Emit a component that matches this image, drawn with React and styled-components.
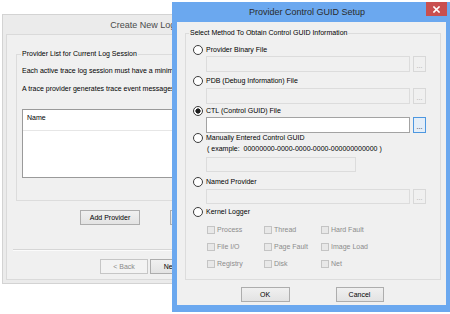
import styled, { createGlobalStyle } from "styled-components";

const GlobalStyle = createGlobalStyle`
  html, body {
    margin: 0;
    padding: 0;
    background: #ffffff;
  }
  body {
    font-family: "Liberation Sans", Arial, sans-serif;
    color: #000;
  }
  * {
    box-sizing: border-box;
  }
`;

const kernelFlags = [
    ["Process", "Thread", "Hard Fault"],
    ["File I/O", "Page Fault", "Image Load"],
    ["Registry", "Disk", "Net"],
];

export default function App() {
    return (
        <>
            <GlobalStyle />
            <Desktop>
                <BackWindow>
                    <BackTitle>Create New Log Session</BackTitle>
                    <BackClient>
                        <GroupBox $pad="0 0 22px 5px" $mt={14}>
                            <Legend $ml={-1}>Provider List for Current Log Session</Legend>
                            <InfoLine $mt={7}>Each active trace log session must have a minimum of one trace provider.</InfoLine>
                            <InfoLine $mt={8}>A trace provider generates trace event messages for the log session.</InfoLine>
                            <ListBox>
                                <ListHeader>Name</ListHeader>
                            </ListBox>
                        </GroupBox>
                        <ButtonRow $mt={9} $pl={64} $gap={30}>
                            <Button $w={60}>Add Provider</Button>
                            <Button $w={60}>Remove</Button>
                        </ButtonRow>
                        <Separator />
                        <ButtonRow $mt={8} $pl={84} $gap={2}>
                            <Button $w={48} disabled>&lt; Back</Button>
                            <Button $w={48}>Next &gt;</Button>
                        </ButtonRow>
                    </BackClient>
                </BackWindow>

                <Dialog>
                    <DialogTitle>
                        <TitleText>Provider Control GUID Setup</TitleText>
                        <CloseButton>
                            <svg width="7" height="7" viewBox="0 0 7 7">
                                <path d="M1 1 L6 6 M6 1 L1 6" stroke="#fff" strokeWidth="1.6" strokeLinecap="square" />
                            </svg>
                        </CloseButton>
                    </DialogTitle>
                    <DialogClient>
                        <GroupBox $pad="0 14px 10px 7px" $mt={6}>
                            <Legend $ml={-4}>Select Method To Obtain Control GUID Information</Legend>

                            <RadioRow $mt={6}><Radio />Provider Binary File</RadioRow>
                            <FileRow $mt={1}><TextBox disabled /><Browse disabled>...</Browse></FileRow>

                            <RadioRow $mt={3}><Radio />PDB (Debug Information) File</RadioRow>
                            <FileRow $mt={2}><TextBox disabled /><Browse disabled>...</Browse></FileRow>

                            <RadioRow $mt={1}><Radio $checked />CTL (Control GUID) File</RadioRow>
                            <FileRow $mt={1}><TextBox /><Browse $focused>...</Browse></FileRow>

                            <RadioRow $mt={-1}><Radio />Manually Entered Control GUID</RadioRow>
                            <Example>( example:&nbsp; 00000000-0000-0000-0000-000000000000 )</Example>
                            <FileRow $mt={3} $h={15}><TextBox disabled $w={150} /></FileRow>

                            <RadioRow $mt={4}><Radio />Named Provider</RadioRow>
                            <FileRow $mt={2} $h={15}><TextBox disabled /><Browse disabled>...</Browse></FileRow>

                            <RadioRow $mt={2}><Radio />Kernel Logger</RadioRow>
                            <CheckGrid>
                                {kernelFlags.flat().map((label) => (
                                    <CheckItem key={label}>
                                        <CheckBox />
                                        {label}
                                    </CheckItem>
                                ))}
                            </CheckGrid>
                        </GroupBox>
                        <DialogButtons>
                            <Button $w={49}>OK</Button>
                            <Button $w={48}>Cancel</Button>
                        </DialogButtons>
                    </DialogClient>
                </Dialog>
            </Desktop>
        </>
    );
}

const Desktop = styled.div`
    position: relative;
    width: 450px;
    height: 314px;
    overflow: hidden;
    background: #ffffff;
`;

const BackWindow = styled.div`
    position: absolute;
    left: 2px;
    top: 14px;
    width: 316px;
    height: 270px;
    border: 1px solid #d3d3d3;
    background: #ebebeb;
    display: flex;
    flex-direction: column;
`;

const BackTitle = styled.div`
    height: 19px;
    display: flex;
    align-items: center;
    justify-content: center;
    padding-top: 1px;
    font-size: 9px;
    color: #4a4a4a;
`;

const BackClient = styled.div`
    flex: 1;
    margin: 0 4px 3px 3px;
    border: 1px solid #dadada;
    background: #f0f0f0;
    display: flex;
    flex-direction: column;
    padding-left: 9px;
`;

const GroupBox = styled.fieldset`
    margin: ${(p) => p.$mt}px 0 0 0;
    padding: ${(p) => p.$pad};
    border: 1px solid #dcdcdc;
    min-width: 0;
    display: flex;
    flex-direction: column;
`;

const Legend = styled.legend`
    font-size: 7px;
    line-height: 10px;
    padding: 0 1px;
    margin-left: ${(p) => p.$ml}px;
    color: #000;
`;

const InfoLine = styled.div`
    margin-top: ${(p) => p.$mt}px;
    font-size: 7px;
    line-height: 10px;
    white-space: nowrap;
`;

const ListBox = styled.div`
    margin-top: 15px;
    height: 69px;
    border: 1px solid #9a9a9a;
    background: #ffffff;
`;

const ListHeader = styled.div`
    height: 21px;
    border-bottom: 1px solid #e6e6e6;
    padding-left: 4px;
    font-size: 7px;
    line-height: 16px;
`;

const ButtonRow = styled.div`
    display: flex;
    margin-top: ${(p) => p.$mt}px;
    padding-left: ${(p) => p.$pl}px;
    gap: ${(p) => p.$gap}px;
`;

const Button = styled.button`
    width: ${(p) => p.$w}px;
    height: 15px;
    padding: 0;
    flex: none;
    font-family: "Liberation Sans", Arial, sans-serif;
    font-size: 7px;
    color: #000;
    border: 1px solid #adadad;
    background: linear-gradient(#f0f0f0, #e3e3e3);

    &:disabled {
        color: #8a8a8a;
        border-color: #c6c6c6;
        background: #f3f3f3;
    }
`;

const Separator = styled.div`
    margin: 24px 0 0 -3px;
    height: 2px;
    background: #d6d6d6;
    border-bottom: 1px solid #fbfbfb;
`;

const Dialog = styled.div`
    position: absolute;
    left: 172px;
    top: 2px;
    width: 278px;
    height: 310px;
    background: #6ba8ef;
    display: flex;
    flex-direction: column;
`;

const DialogTitle = styled.div`
    height: 20px;
    display: grid;
    grid-template-columns: 22px 1fr 30px;
    align-items: center;
`;

const TitleText = styled.div`
    grid-column: 2;
    text-align: center;
    font-size: 9px;
    color: #2a2a2a;
`;

const CloseButton = styled.div`
    grid-column: 3;
    justify-self: end;
    align-self: start;
    margin-right: 3px;
    width: 21px;
    height: 14px;
    background: #c94f4f;
    display: flex;
    align-items: center;
    justify-content: center;
`;

const DialogClient = styled.div`
    flex: 1;
    margin: 0 4px 7px 5px;
    background: #f0f0f0;
    padding: 0 5px 0 8px;
    display: flex;
    flex-direction: column;
`;

const RadioRow = styled.div`
    margin-top: ${(p) => p.$mt}px;
    height: 11px;
    display: flex;
    align-items: center;
    gap: 3px;
    font-size: 7px;
    white-space: nowrap;
`;

const Radio = styled.span`
    width: 10px;
    height: 10px;
    flex: none;
    border: 1px solid #3c3c3c;
    border-radius: 50%;
    background: ${(p) =>
        p.$checked ? "radial-gradient(circle, #1e1e1e 0 2.3px, #ffffff 2.9px)" : "#ffffff"};
`;

const FileRow = styled.div`
    margin-top: ${(p) => p.$mt}px;
    margin-left: 13px;
    height: ${(p) => p.$h || 16}px;
    display: flex;
    gap: 3px;
`;

const TextBox = styled.div`
    flex: ${(p) => (p.$w ? "none" : "1")};
    width: ${(p) => (p.$w ? `${p.$w}px` : "auto")};
    border: 1px solid ${(p) => (p.disabled ? "#dcdcdc" : "#a3a3a3")};
    background: ${(p) => (p.disabled ? "#f0f0f0" : "#ffffff")};
`;

const Browse = styled.div`
    width: 13px;
    flex: none;
    border: 1px solid ${(p) => (p.$focused ? "#4d97e0" : "#d8d8d8")};
    background: ${(p) => (p.$focused ? "#e4eef8" : "#f0f0f0")};
    color: ${(p) => (p.disabled ? "#a5a5a5" : "#222")};
    font-size: 7px;
    display: flex;
    align-items: flex-end;
    justify-content: center;
    padding-bottom: 2px;
    line-height: 7px;
`;

const Example = styled.div`
    margin-left: 14px;
    height: 11px;
    font-size: 7px;
    line-height: 11px;
    white-space: nowrap;
`;

const CheckGrid = styled.div`
    margin: 7px 0 0 14px;
    display: grid;
    grid-template-columns: repeat(3, 57px);
    grid-auto-rows: 11px;
    row-gap: 6px;
`;

const CheckItem = styled.div`
    display: flex;
    align-items: center;
    gap: 2px;
    font-size: 7px;
    color: #8c8c8c;
    white-space: nowrap;
`;

const CheckBox = styled.span`
    width: 8px;
    height: 8px;
    flex: none;
    border: 1px solid #c4c4c4;
    background: #e8e8e8;
`;

const DialogButtons = styled.div`
    margin-top: 7px;
    display: flex;
    justify-content: center;
    gap: 46px;
    padding-right: 2px;
`;
